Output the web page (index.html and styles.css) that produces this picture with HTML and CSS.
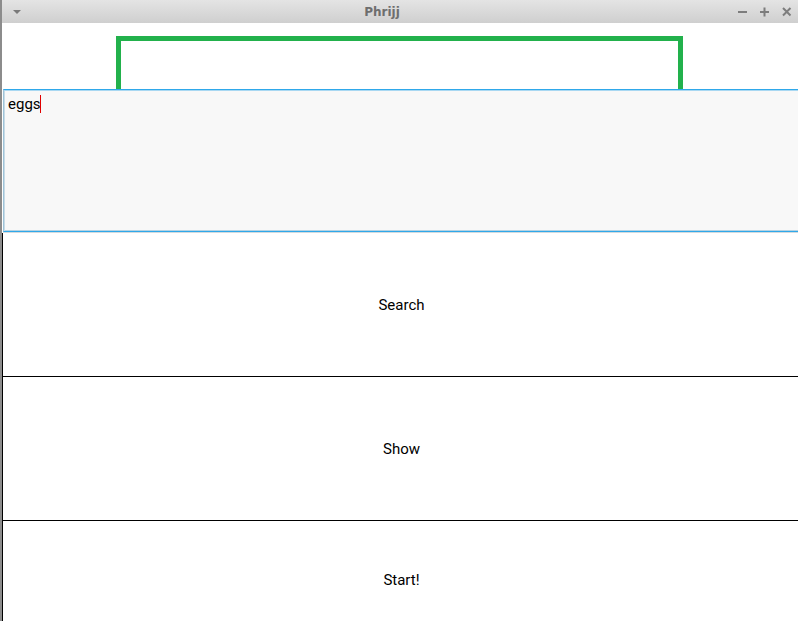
FILE: index.html
```html
<!DOCTYPE html>
<html>
<head>
<meta charset="utf-8">
<title>Phrijj</title>
<link rel="stylesheet" href="styles.css">
</head>
<body>
<div class="window">
  <div class="titlebar">
    <svg class="menu-icon" width="10" height="6" viewBox="0 0 10 6"><path d="M1 1 H9 L5 5 Z" fill="#7a7a7a"/></svg>
    <div class="title">Phrijj</div>
    <div class="controls">
      <svg width="10" height="10" viewBox="0 0 10 10"><rect x="0" y="4" width="9" height="2" fill="#7d7d7d"/></svg>
      <svg width="10" height="10" viewBox="0 0 10 10"><rect x="0" y="4" width="9" height="2" fill="#7d7d7d"/><rect x="3.5" y="0.5" width="2" height="9" fill="#7d7d7d"/></svg>
      <svg width="10" height="10" viewBox="0 0 10 10"><path d="M1 1 L8.5 8.5 M8.5 1 L1 8.5" stroke="#7d7d7d" stroke-width="2"/></svg>
    </div>
  </div>
  <div class="canvas">
    <svg class="drawing" width="796" height="210" viewBox="0 0 796 210">
      <g transform="translate(-2,-23)" fill="#22b14c">
        <rect x="116" y="36" width="567" height="5"/>
        <rect x="116" y="36" width="5" height="198"/>
        <rect x="678" y="36" width="5" height="198"/>
        <g fill="#1a9a4a">
          <rect x="209" y="232" width="16" height="1.5"/>
          <rect x="266" y="232" width="16" height="1.5"/>
          <rect x="305" y="232" width="15" height="1.5"/>
          <rect x="328" y="232" width="39" height="1.5"/>
          <rect x="404" y="232" width="14" height="1.5"/>
          <rect x="426" y="232" width="26" height="1.5"/>
          <rect x="469" y="232" width="16" height="1.5"/>
          <rect x="514" y="232" width="15" height="1.5"/>
          <rect x="559" y="232" width="15" height="1.5"/>
        </g>
      </g>
    </svg>
    <div class="textinput">
      <span class="value">eggs</span><span class="cursor"></span>
    </div>
  </div>
  <div class="button btn-search">Search</div>
  <div class="button btn-show">Show</div>
  <div class="button btn-start">Start!</div>
</div>
</body>
</html>
```

FILE: styles.css
```css
html, body {
  margin: 0;
  padding: 0;
  width: 798px;
  height: 621px;
  overflow: hidden;
  background: #ffffff;
}

.window {
  width: 796px;
  height: 621px;
  border-left: 2px solid #8c8c8c;
  display: flex;
  flex-direction: column;
  overflow: hidden;
  font-family: Roboto, "Liberation Sans", sans-serif;
}

.titlebar {
  flex: 0 0 23px;
  height: 23px;
  box-sizing: border-box;
  background: linear-gradient(#e4e4e4, #cfcfcf);
  display: flex;
  align-items: center;
  padding-left: 10px;
  padding-right: 6px;
}

.menu-icon {
  flex: 0 0 auto;
  margin-top: 1px;
}

.title {
  flex: 1;
  text-align: center;
  font-family: "DejaVu Sans", sans-serif;
  font-weight: bold;
  font-size: 12px;
  color: #6e6e6e;
  padding-left: 4px;
  padding-top: 1px;
}

.controls {
  display: flex;
  gap: 12px;
  align-items: center;
}

.controls svg {
  display: block;
}

.canvas {
  flex: 0 0 210px;
  height: 210px;
  position: relative;
}

.drawing {
  display: block;
}

.textinput {
  position: absolute;
  left: 1px;
  top: 66px;
  width: 795px;
  height: 143px;
  box-sizing: border-box;
  background: #f8f8f8;
  border: 1px solid #9ec3d8;
  border-top-color: #2fa8ea;
  border-bottom-color: #2fa8ea;
  border-right: none;
  box-shadow: inset 0 1px 0 #a9d8f2, inset 1px 0 0 #c8dbe6, inset 0 -1px 0 #b5d3e3, 0 1px 0 #d4dadd;
  padding: 5px 0 0 4px;
  font-size: 15px;
  color: #000;
  display: flex;
  align-items: flex-start;
}

.value {
  display: inline-block;
  width: 32px;
  line-height: 18px;
  white-space: nowrap;
}

.cursor {
  display: inline-block;
  width: 1px;
  height: 18px;
  background: #e00000;
}

.button {
  flex: 0 0 auto;
  display: flex;
  align-items: center;
  justify-content: center;
  border-left: 1px solid #000;
  padding-left: 2px;
  font-size: 15px;
  color: #000;
  background: #fff;
}

.btn-search {
  height: 143px;
}

.btn-show {
  height: 143px;
  border-top: 1px solid #000;
}

.btn-start {
  height: 118px;
  border-top: 1px solid #000;
}
```
